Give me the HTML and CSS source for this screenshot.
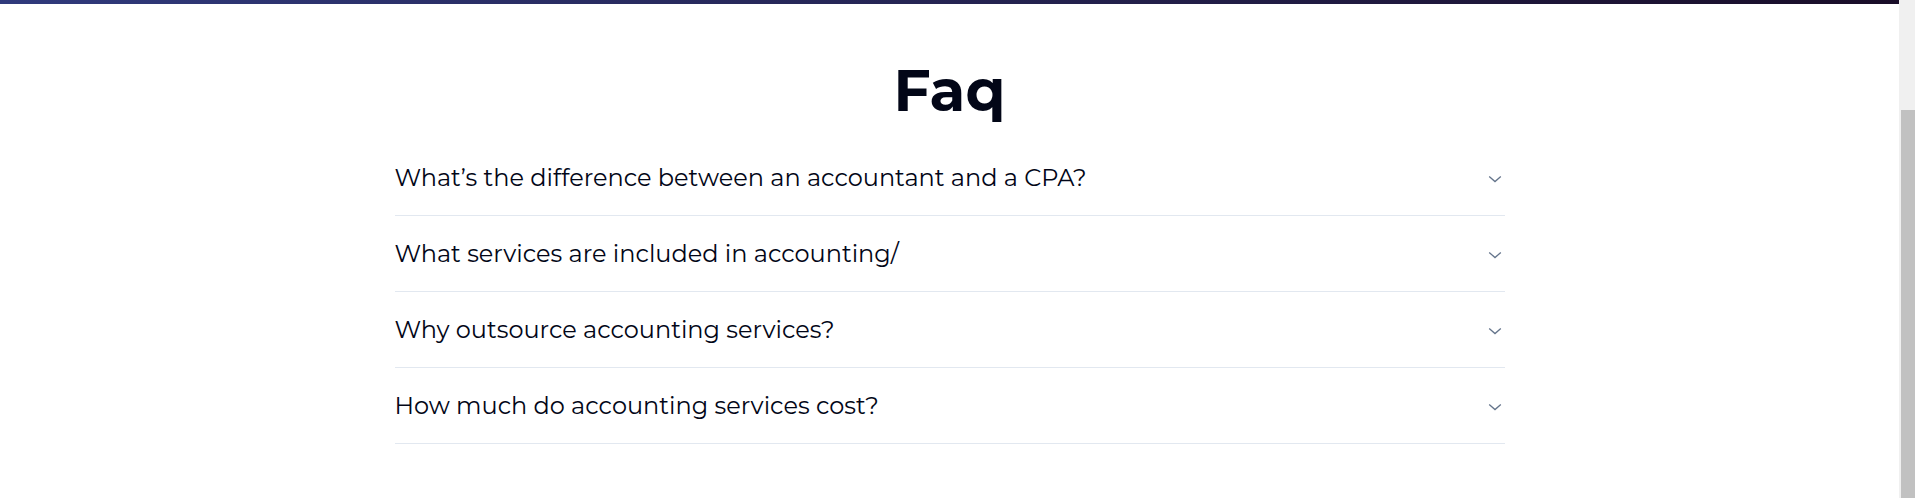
FILE: index.html
```html
<!DOCTYPE html>
<html lang="en">
<head>
<meta charset="utf-8">
<meta name="viewport" content="width=device-width, initial-scale=1">
<title>Faq</title>
<link rel="stylesheet" href="styles.css">
</head>
<body>
<div class="page">
  <div class="band"></div>
  <main class="faq">
    <h1 class="title">Faq</h1>
    <div class="list">
      <button class="item" type="button" aria-expanded="false">
        <span>What’s the difference between an accountant and a CPA?</span>
        <svg class="chevron" viewBox="0 0 16 16" aria-hidden="true"><path d="M2.200 6.400 8 11.600l5.800-5.200"/></svg>
      </button>
      <button class="item" type="button" aria-expanded="false">
        <span>What services are included in accounting/</span>
        <svg class="chevron" viewBox="0 0 16 16" aria-hidden="true"><path d="M2.200 6.400 8 11.600l5.800-5.200"/></svg>
      </button>
      <button class="item" type="button" aria-expanded="false">
        <span>Why outsource accounting services?</span>
        <svg class="chevron" viewBox="0 0 16 16" aria-hidden="true"><path d="M2.200 6.400 8 11.600l5.800-5.200"/></svg>
      </button>
      <button class="item" type="button" aria-expanded="false">
        <span>How much do accounting services cost?</span>
        <svg class="chevron" viewBox="0 0 16 16" aria-hidden="true"><path d="M2.200 6.400 8 11.600l5.800-5.200"/></svg>
      </button>
    </div>
  </main>
</div>
<div class="scrollbar" aria-hidden="true"><div class="thumb"></div></div>
</body>
</html>
```
FILE: styles.css
```css
* {
  box-sizing: border-box;
}

body {
  margin: 0;
  min-height: 100vh;
  display: flex;
  background: #fff;
  color: #020617;
  font-family: Montserrat, Inter, sans-serif;
}

.page {
  flex: 1;
}

.band {
  height: 4px;
  background: linear-gradient(90deg, #303a7c, #190d28);
}

.faq {
  max-width: 1110px;
  margin: 0 auto;
  padding-top: 49px;
}

.title {
  margin: 0 0 11px;
  font-size: 58px;
  line-height: 76px;
  font-weight: 700;
  text-align: center;
}

.list {
  display: flex;
  flex-direction: column;
}

.item {
  display: flex;
  align-items: center;
  justify-content: space-between;
  gap: 16px;
  width: 100%;
  padding: 20px 2px 20px 0;
  border: 0;
  border-bottom: 1px solid #e2e8f0;
  background: none;
  color: inherit;
  font: inherit;
  font-size: 24px;
  line-height: 35px;
  text-align: left;
  cursor: pointer;
}

.chevron {
  flex: none;
  width: 16px;
  height: 16px;
  fill: none;
  stroke: #64748b;
  stroke-width: 1.3;
}

.scrollbar {
  width: 16px;
  padding: 110px 0 0 2px;
  display: flex;
  background: #f0f0f0;
}

.thumb {
  flex: 1;
  background: #c1c1c1;
}
```
